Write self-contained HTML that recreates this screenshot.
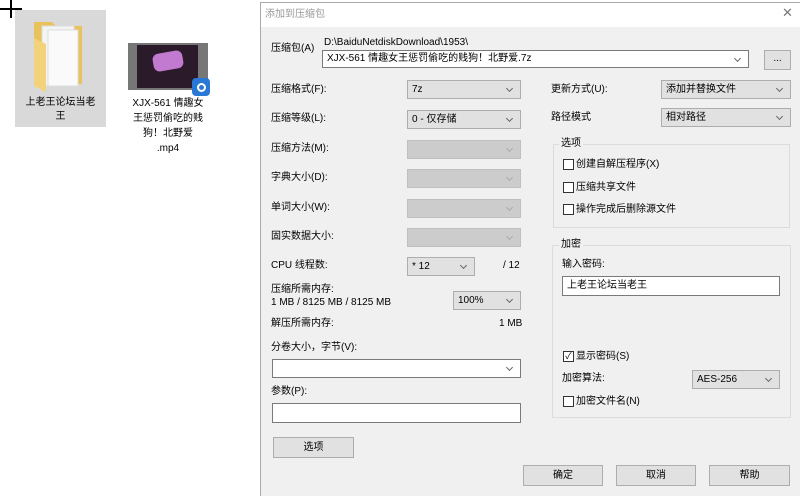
<!DOCTYPE html>
<html><head><meta charset="utf-8"><style>
*{margin:0;padding:0;box-sizing:border-box}
body{width:800px;height:496px;background:#fff;position:relative;overflow:hidden;font-family:"Liberation Sans","Noto Sans CJK SC",sans-serif;font-size:10px;color:#000}
.a{position:absolute;white-space:nowrap}
.lb{position:absolute;white-space:nowrap;line-height:12px}
.cb{position:absolute;height:19px;border:1px solid #adadad;background:#e1e1e1;padding-left:4px;line-height:17px}
.cb.w{background:#fff;border-color:#7a7a7a}
.cb.d{background:#ccc;border-color:#bfbfbf}
.cb:after{content:"";position:absolute;right:8px;top:5px;width:4px;height:4px;border-right:1px solid #666;border-bottom:1px solid #666;transform:rotate(45deg)}
.cb.d:after{border-color:#aaa}
.in{position:absolute;background:#fff;border:1px solid #7a7a7a;padding-left:4px;line-height:17px}
.bt{position:absolute;background:#e1e1e1;border:1px solid #adadad;text-align:center}
.chk{position:absolute;width:11px;height:11px;border:1px solid #333;background:#fff}
.gb{position:absolute;border:1px solid #dcdcdc}
.gl{position:absolute;background:#f0f0f0;padding:0 2px;line-height:12px}
</style></head><body>
<div class="a" style="left:0;width:22px;height:2px;background:#000;top:8px"></div>
<div class="a" style="left:10px;top:0;width:2px;height:18px;background:#000"></div>
<div class="a" style="left:15px;top:10px;width:91px;height:117px;background:#d9d9d9"></div>
<svg class="a" style="left:30px;top:18px" width="58" height="74" viewBox="0 0 58 74">
<path d="M4 4h18l4 4h26v58H4z" fill="#e8c25a"/>
<path d="M12 8h32v60H12z" fill="#f4f4f4" stroke="#ddd"/>
<path d="M18 12h30v56H18z" fill="#fafafa" stroke="#ddd"/>
<path d="M4 20l12 6v48L4 68z" fill="#f2d27a"/>
</svg>
<div class="a" style="left:15px;top:96px;width:91px;text-align:center;white-space:normal;line-height:14px">上老王论坛当老<br>王</div>
<div class="a" style="left:128px;top:43px;width:80px;height:47px;background:#777"></div>
<div class="a" style="left:137px;top:45px;width:61px;height:43px;background:#2a1a2a"></div>
<div class="a" style="left:153px;top:52px;width:30px;height:18px;background:#c27ad0;border-radius:6px;transform:rotate(-10deg)"></div>
<div class="a" style="left:192px;top:78px;width:18px;height:18px;background:#2a78d6;border-radius:4px"></div>
<div class="a" style="left:197px;top:83px;width:9px;height:9px;border:2px solid #fff;border-radius:50%"></div>
<div class="a" style="left:118px;top:96px;width:100px;text-align:center;white-space:normal;line-height:15px">XJX-561 情趣女<br>王惩罚偷吃的贱<br>狗！北野爱<br>.mp4</div>
<div class="a" style="left:260px;top:2px;width:540px;height:494px;background:#f0f0f0;border-left:1px solid #aaa;border-top:1px solid #aaa"></div>
<div class="a" style="left:261px;top:3px;width:539px;height:24px;background:#fff"></div>
<div class="lb" style="left:265px;top:9px;color:#999">添加到压缩包</div>
<div class="lb" style="left:782px;top:7px;color:#777;font-size:13px">✕</div>
<div class="lb" style="left:271px;top:43px">压缩包(A)</div>
<div class="lb" style="left:324px;top:37px">D:\BaiduNetdiskDownload\1953\</div>
<div class="cb w" style="left:322px;top:50px;width:427px;height:18px;line-height:16px">XJX-561 情趣女王惩罚偷吃的贱狗！北野爱.7z</div>
<div class="bt" style="left:764px;top:50px;width:27px;height:20px;line-height:16px">...</div>
<div class="lb" style="left:271px;top:84px">压缩格式(F):</div>
<div class="cb" style="left:407px;top:80px;width:114px">7z</div>
<div class="lb" style="left:271px;top:113px">压缩等级(L):</div>
<div class="cb" style="left:407px;top:110px;width:114px">0 - 仅存储</div>
<div class="lb" style="left:271px;top:143px">压缩方法(M):</div>
<div class="cb d" style="left:407px;top:140px;width:114px"></div>
<div class="lb" style="left:271px;top:172px">字典大小(D):</div>
<div class="cb d" style="left:407px;top:169px;width:114px"></div>
<div class="lb" style="left:271px;top:202px">单词大小(W):</div>
<div class="cb d" style="left:407px;top:199px;width:114px"></div>
<div class="lb" style="left:271px;top:231px">固实数据大小:</div>
<div class="cb d" style="left:407px;top:228px;width:114px"></div>
<div class="lb" style="left:271px;top:260px">CPU 线程数:</div>
<div class="cb" style="left:407px;top:257px;width:68px">* 12</div>
<div class="lb" style="left:503px;top:260px">/ 12</div>
<div class="lb" style="left:271px;top:284px">压缩所需内存:</div>
<div class="lb" style="left:271px;top:297px">1 MB / 8125 MB / 8125 MB</div>
<div class="cb" style="left:453px;top:291px;width:68px">100%</div>
<div class="lb" style="left:271px;top:318px">解压所需内存:</div>
<div class="lb" style="left:499px;top:318px">1 MB</div>
<div class="lb" style="left:271px;top:342px">分卷大小，字节(V):</div>
<div class="cb w" style="left:272px;top:359px;width:249px"></div>
<div class="lb" style="left:271px;top:386px">参数(P):</div>
<div class="in" style="left:272px;top:403px;width:249px;height:20px"></div>
<div class="bt" style="left:273px;top:437px;width:81px;height:21px;line-height:19px">选项</div>
<div class="lb" style="left:551px;top:84px">更新方式(U):</div>
<div class="cb" style="left:661px;top:80px;width:130px">添加并替换文件</div>
<div class="lb" style="left:551px;top:112px">路径模式</div>
<div class="cb" style="left:661px;top:108px;width:130px">相对路径</div>
<div class="gb" style="left:553px;top:144px;width:237px;height:84px"></div>
<div class="gl" style="left:559px;top:138px">选项</div>
<div class="chk" style="left:563px;top:159px"></div><div class="lb" style="left:576px;top:159px">创建自解压程序(X)</div>
<div class="chk" style="left:563px;top:182px"></div><div class="lb" style="left:576px;top:182px">压缩共享文件</div>
<div class="chk" style="left:563px;top:204px"></div><div class="lb" style="left:576px;top:204px">操作完成后删除源文件</div>
<div class="gb" style="left:552px;top:245px;width:239px;height:173px"></div>
<div class="gl" style="left:559px;top:239px">加密</div>
<div class="lb" style="left:562px;top:259px">输入密码:</div>
<div class="in" style="left:562px;top:276px;width:218px;height:20px">上老王论坛当老王</div>
<div class="chk" style="left:563px;top:351px;text-align:center;line-height:9px;font-size:9px">✓</div><div class="lb" style="left:576px;top:351px">显示密码(S)</div>
<div class="lb" style="left:562px;top:373px">加密算法:</div>
<div class="cb" style="left:692px;top:370px;width:88px">AES-256</div>
<div class="chk" style="left:563px;top:396px"></div><div class="lb" style="left:576px;top:396px">加密文件名(N)</div>
<div class="bt" style="left:523px;top:465px;width:80px;height:21px;line-height:19px">确定</div>
<div class="bt" style="left:616px;top:465px;width:80px;height:21px;line-height:19px">取消</div>
<div class="bt" style="left:709px;top:465px;width:81px;height:21px;line-height:19px">帮助</div>
</body></html>
